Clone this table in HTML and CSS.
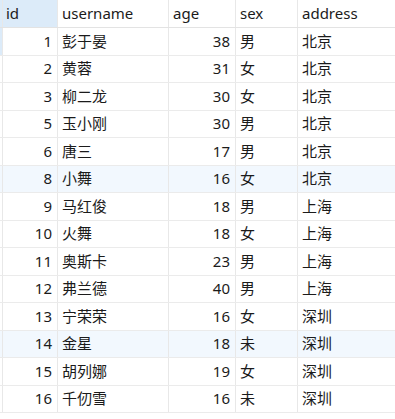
FILE: index.html
```html
<!DOCTYPE html>
<html lang="zh">
<head>
<meta charset="utf-8">
<title>user</title>
<link rel="stylesheet" href="styles.css">
</head>
<body>
<div class="grid">
  <div class="row head">
    <div class="gut sel"></div>
    <div class="c id hid">id</div>
    <div class="c">username</div>
    <div class="c">age</div>
    <div class="c">sex</div>
    <div class="c">address</div>
  </div>
  <div class="row"><div class="gut cur"></div><div class="c id num">1</div><div class="c">彭于晏</div><div class="c num">38</div><div class="c">男</div><div class="c">北京</div></div>
  <div class="row"><div class="gut"></div><div class="c id num">2</div><div class="c">黄蓉</div><div class="c num">31</div><div class="c">女</div><div class="c">北京</div></div>
  <div class="row"><div class="gut"></div><div class="c id num">3</div><div class="c">柳二龙</div><div class="c num">30</div><div class="c">女</div><div class="c">北京</div></div>
  <div class="row"><div class="gut"></div><div class="c id num">5</div><div class="c">玉小刚</div><div class="c num">30</div><div class="c">男</div><div class="c">北京</div></div>
  <div class="row"><div class="gut"></div><div class="c id num">6</div><div class="c">唐三</div><div class="c num">17</div><div class="c">男</div><div class="c">北京</div></div>
  <div class="row hl"><div class="gut"></div><div class="c id num">8</div><div class="c">小舞</div><div class="c num">16</div><div class="c">女</div><div class="c">北京</div></div>
  <div class="row"><div class="gut"></div><div class="c id num">9</div><div class="c">马红俊</div><div class="c num">18</div><div class="c">男</div><div class="c">上海</div></div>
  <div class="row"><div class="gut"></div><div class="c id num">10</div><div class="c">火舞</div><div class="c num">18</div><div class="c">女</div><div class="c">上海</div></div>
  <div class="row"><div class="gut"></div><div class="c id num">11</div><div class="c">奥斯卡</div><div class="c num">23</div><div class="c">男</div><div class="c">上海</div></div>
  <div class="row"><div class="gut"></div><div class="c id num">12</div><div class="c">弗兰德</div><div class="c num">40</div><div class="c">男</div><div class="c">上海</div></div>
  <div class="row"><div class="gut"></div><div class="c id num">13</div><div class="c">宁荣荣</div><div class="c num">16</div><div class="c">女</div><div class="c">深圳</div></div>
  <div class="row hl"><div class="gut"></div><div class="c id num">14</div><div class="c">金星</div><div class="c num">18</div><div class="c">未</div><div class="c">深圳</div></div>
  <div class="row"><div class="gut"></div><div class="c id num">15</div><div class="c">胡列娜</div><div class="c num">19</div><div class="c">女</div><div class="c">深圳</div></div>
  <div class="row"><div class="gut"></div><div class="c id num">16</div><div class="c">千仞雪</div><div class="c num">16</div><div class="c">未</div><div class="c">深圳</div></div>
</div>
</body>
</html>
```

FILE: styles.css
```css
html, body {
  margin: 0;
  padding: 0;
  background: #ffffff;
}

body {
  font-family: "Noto Sans", "Noto Sans CJK SC", sans-serif;
  font-size: 15px;
  color: #1b1b1b;
}

.grid {
  display: flex;
  flex-direction: column;
}

.row {
  display: grid;
  grid-template-columns: 2px 55px 111px 67px 62px 1fr;
  height: 27.5px;
  box-sizing: border-box;
  border-bottom: 1px solid #ebebeb;
}

.row.head {
  height: 28px;
  border-bottom: 1px solid #e3e3e3;
}

.row.hl {
  background: #f2f8fe;
}

.gut {
  background: transparent;
}

.gut.sel,
.gut.cur {
  background: #dcebf9;
}

.c {
  display: flex;
  align-items: center;
  border-left: 1px solid #e8e8e8;
  padding: 0 5px 0 4px;
  white-space: nowrap;
  overflow: hidden;
  line-height: 1;
}

.num {
  justify-content: flex-end;
}

.hid {
  background: #dcebf9;
  padding-left: 3px;
}
```
